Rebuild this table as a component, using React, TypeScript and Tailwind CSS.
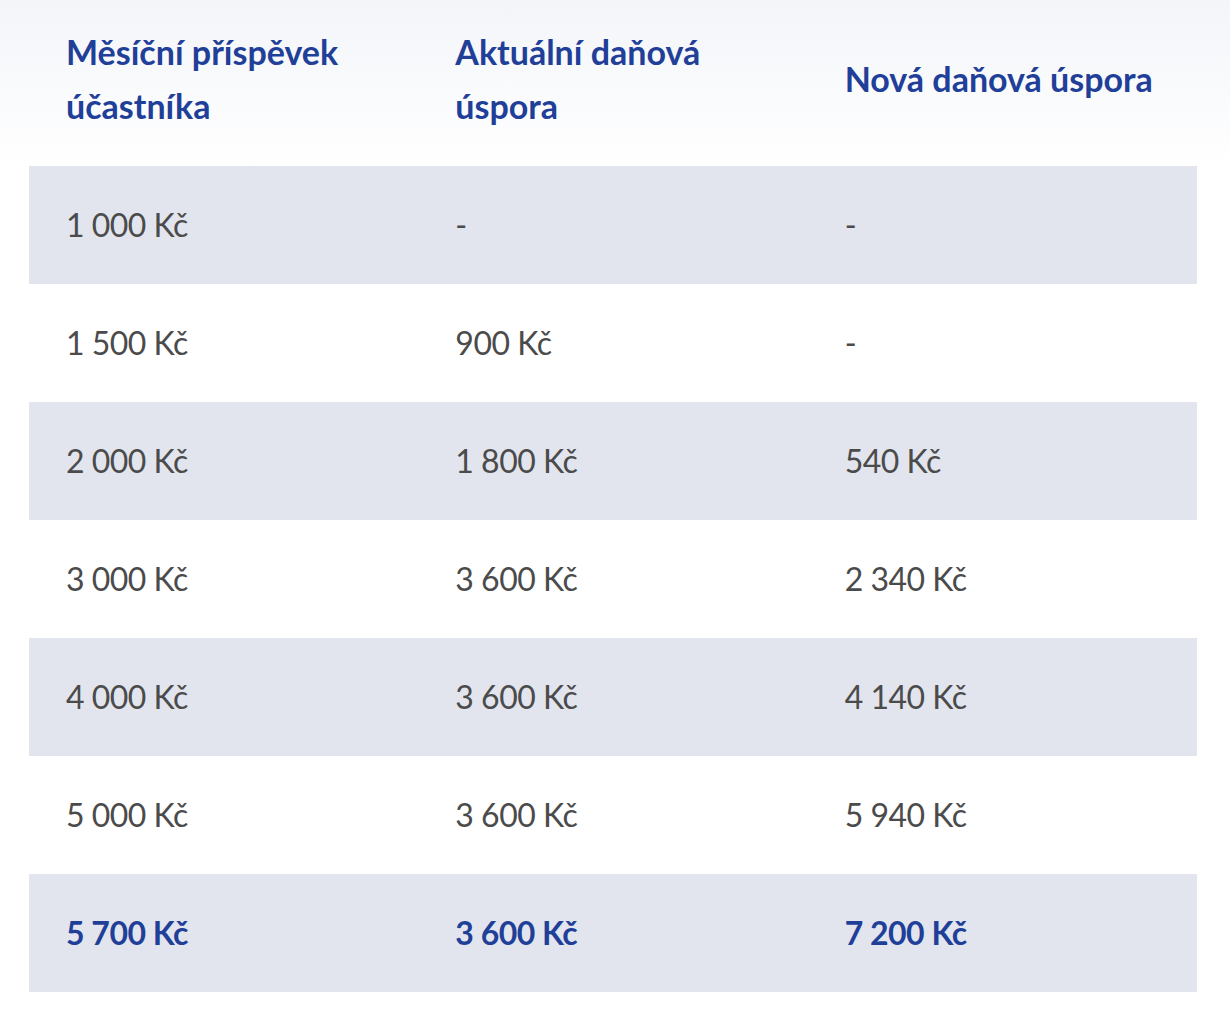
const rows = [
  ['1 000 Kč', '-', '-'],
  ['1 500 Kč', '900 Kč', '-'],
  ['2 000 Kč', '1 800 Kč', '540 Kč'],
  ['3 000 Kč', '3 600 Kč', '2 340 Kč'],
  ['4 000 Kč', '3 600 Kč', '4 140 Kč'],
  ['5 000 Kč', '3 600 Kč', '5 940 Kč'],
  ['5 700 Kč', '3 600 Kč', '7 200 Kč'],
];

const headers = ['Měsíční příspěvek účastníka', 'Aktuální daňová úspora', 'Nová daňová úspora'];

export default function App() {
  return (
    <div className="min-h-screen bg-white font-['Lato','Noto_Sans',sans-serif]">
      <div className="bg-gradient-to-b from-[#f3f5f9] to-white pl-[29px] pr-[33px]">
        <div className="grid grid-cols-3 h-[166px] pb-2 items-center">
          {headers.map((h) => (
            <div key={h} className="pl-[37px] pr-6 text-[34px] leading-[54px] font-bold text-[#1f3f98]">
              {h}
            </div>
          ))}
        </div>
      </div>
      <div className="pl-[29px] pr-[33px]">
        {rows.map((r, i) => {
          const last = i === rows.length - 1;
          return (
            <div
              key={i}
              className={`grid grid-cols-3 h-[118px] items-center ${i % 2 === 0 ? 'bg-[#e2e5ed]' : 'bg-white'}`}
            >
              {r.map((c, j) => (
                <div
                  key={j}
                  className={`pl-[37px] text-[32px] tracking-[-0.5px] ${last ? 'font-bold text-[#1f3f98]' : 'text-[#4b4b4b]'}`}
                >
                  {c}
                </div>
              ))}
            </div>
          );
        })}
      </div>
    </div>
  );
}
